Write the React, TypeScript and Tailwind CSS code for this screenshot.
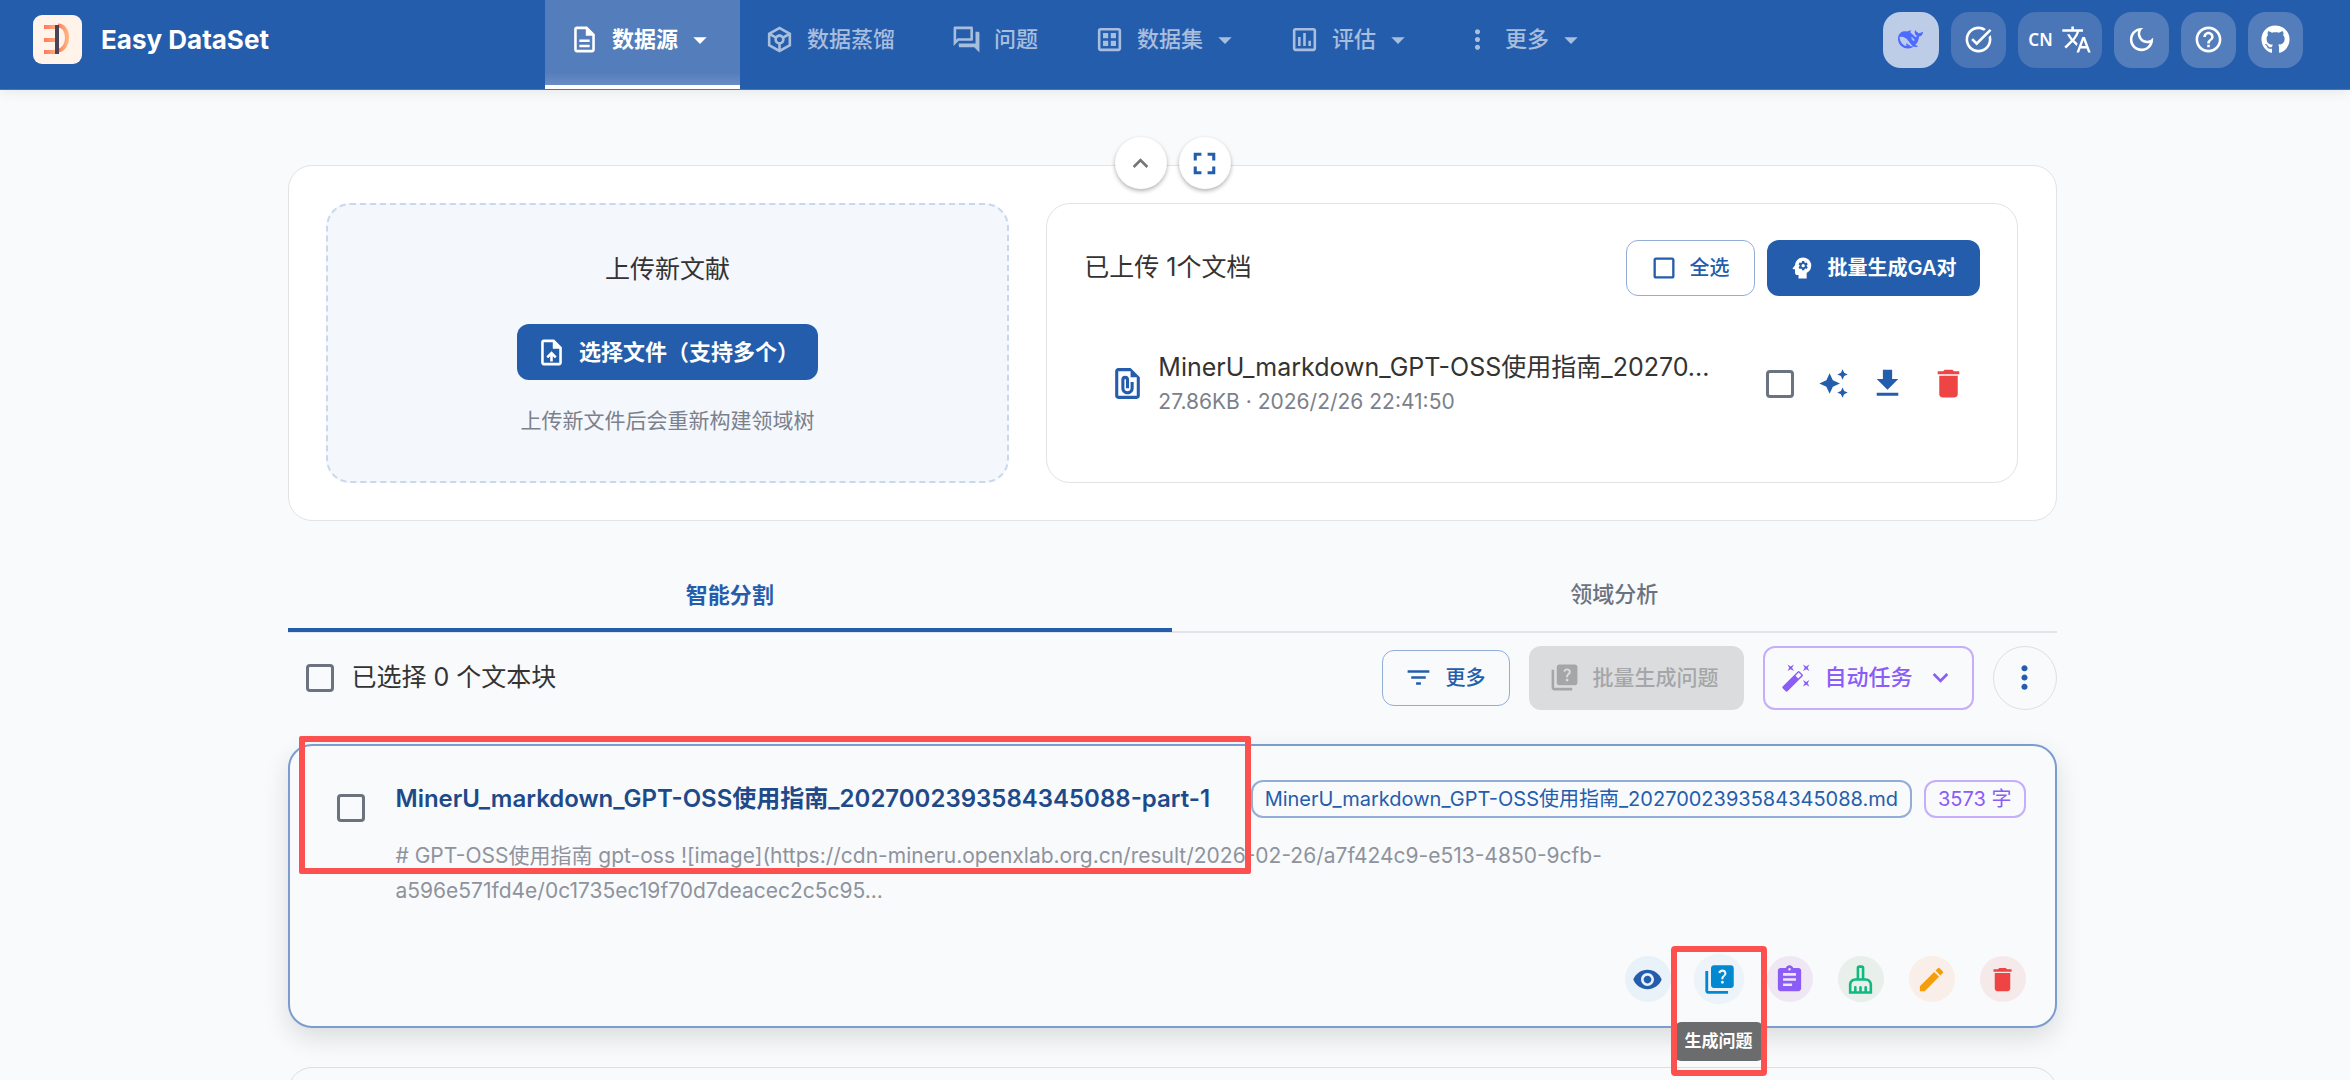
import type { ReactNode } from 'react';
import type { IconType } from 'react-icons';
import {
  MdArrowDropDown,
  MdAssignment,
  MdAutoAwesome,
  MdAutoFixHigh,
  MdCheckBoxOutlineBlank,
  MdDelete,
  MdEdit,
  MdExpandLess,
  MdExpandMore,
  MdFileDownload,
  MdFilterList,
  MdFullscreen,
  MdHelpOutline,
  MdMoreVert,
  MdOutlineAssessment,
  MdOutlineCleaningServices,
  MdOutlineDarkMode,
  MdOutlineDataset,
  MdOutlineDescription,
  MdOutlineFilePresent,
  MdOutlineForum,
  MdOutlineToken,
  MdPsychology,
  MdQuiz,
  MdTaskAlt,
  MdTranslate,
  MdUploadFile,
  MdVisibility,
} from 'react-icons/md';
import { FaGithub } from 'react-icons/fa';

function Logo() {
  return (
    <svg viewBox="0 0 49 49" className="size-[49px]" aria-hidden="true">
      <defs>
        <linearGradient id="logo-bar" x1="0" x2="1">
          <stop offset="0" stopColor="#ff7a59" />
          <stop offset="1" stopColor="#ffa478" />
        </linearGradient>
        <linearGradient id="logo-arc" x1="0" x2="1">
          <stop offset="0" stopColor="#ff7f5e" />
          <stop offset="1" stopColor="#ffb07c" />
        </linearGradient>
      </defs>
      <rect width="49" height="49" rx="9" fill="#fff3ea" />
      <rect x="11" y="10" width="11" height="4" fill="url(#logo-bar)" />
      <rect x="11" y="23" width="11" height="4" fill="url(#logo-bar)" />
      <rect x="11" y="35" width="11" height="4" fill="url(#logo-bar)" />
      <path d="M25 10.500c5.500 0 9 5 9 12s-3.500 12.500-9 13" fill="none" stroke="url(#logo-arc)" strokeWidth="4" />
      <rect x="22" y="10" width="4" height="29" fill="#4a4458" />
    </svg>
  );
}

function Whale() {
  return (
    <svg viewBox="0 0 24 24" className="size-[25px] fill-[#4d6bfe]" aria-hidden="true">
      <path d="M23.748 4.482c-.254-.124-.364.113-.512.234-.051.039-.094.09-.137.136-.372.397-.806.657-1.373.626-.829-.046-1.537.214-2.163.848-.133-.782-.575-1.248-1.247-1.548-.352-.156-.708-.311-.955-.65-.172-.241-.219-.51-.305-.774-.055-.16-.11-.323-.293-.35-.2-.031-.278.136-.356.276-.313.572-.434 1.202-.422 1.84.027 1.436.633 2.58 1.838 3.393.137.093.172.187.129.323-.082.28-.18.552-.266.833-.055.179-.137.217-.329.14a5.526 5.526 0 01-1.736-1.18c-.857-.828-1.631-1.742-2.597-2.458a11.365 11.365 0 00-.689-.471c-.985-.957.13-1.743.388-1.836.27-.098.093-.432-.779-.428-.872.004-1.67.295-2.687.684a3.055 3.055 0 01-.465.137 9.597 9.597 0 00-2.883-.102c-1.885.21-3.39 1.102-4.497 2.623C.082 8.606-.231 10.684.152 12.85c.403 2.284 1.569 4.175 3.36 5.653 1.858 1.533 3.997 2.284 6.438 2.14 1.482-.085 3.133-.284 4.994-1.86.47.234.962.327 1.78.397.63.059 1.236-.03 1.705-.128.735-.156.684-.837.419-.961-2.155-1.004-1.682-.595-2.113-.926 1.096-1.296 2.746-2.642 3.392-7.003.05-.347.007-.565 0-.845-.004-.17.035-.237.23-.256a4.173 4.173 0 001.545-.475c1.396-.763 1.96-2.015 2.093-3.517.02-.23-.004-.467-.247-.588zM11.581 18c-2.089-1.642-3.102-2.183-3.52-2.16-.392.024-.321.471-.235.763.09.288.207.486.371.739.114.167.192.416-.113.603-.673.416-1.842-.14-1.897-.167-1.361-.802-2.5-1.86-3.301-3.307-.774-1.393-1.224-2.887-1.298-4.482-.02-.386.093-.522.477-.592a4.696 4.696 0 011.529-.039c2.132.312 3.946 1.265 5.468 2.774.868.86 1.525 1.887 2.202 2.891.72 1.066 1.494 2.082 2.48 2.914.348.292.625.514.891.677-.802.09-2.14.11-3.054-.614zm1-6.44a.306.306 0 01.415-.287.302.302 0 01.2.288.306.306 0 01-.31.307.303.303 0 01-.304-.308zm3.11 1.596c-.2.081-.399.151-.59.16a1.245 1.245 0 01-.798-.254c-.274-.23-.47-.358-.552-.758a1.73 1.73 0 01.016-.588c.07-.327-.008-.537-.239-.727-.187-.156-.426-.199-.688-.199a.559.559 0 01-.254-.078c-.11-.054-.2-.19-.114-.358.028-.054.16-.186.192-.21.356-.202.767-.136 1.146.016.352.144.618.408 1.001.782.391.451.462.576.685.914.176.265.336.537.445.848.067.195-.019.354-.25.452z" />
    </svg>
  );
}

type NavItem = { label: string; icon: IconType; menu?: boolean; active?: boolean };

const navItems: NavItem[] = [
  { label: '数据源', icon: MdOutlineDescription, menu: true, active: true },
  { label: '数据蒸馏', icon: MdOutlineToken },
  { label: '问题', icon: MdOutlineForum },
  { label: '数据集', icon: MdOutlineDataset, menu: true },
  { label: '评估', icon: MdOutlineAssessment, menu: true },
  { label: '更多', icon: MdMoreVert, menu: true },
];

function NavLink({ label, icon: Icon, menu, active }: NavItem) {
  return (
    <a
      href="#"
      aria-current={active ? 'page' : undefined}
      className={
        active
          ? 'flex items-center border-b-4 border-white bg-linear-to-b from-[#547dbb] from-85% to-[#6a8cc4] px-6 pt-1.5 pb-3 font-bold text-white'
          : 'flex items-center border-b-4 border-transparent px-6 pt-1.5 pb-3 font-medium text-[#a8bedd]'
      }
    >
      <Icon className="size-[31px] shrink-0" />
      <span className="ml-3">{label}</span>
      {menu ? <MdArrowDropDown className="ml-1.5 size-8 shrink-0" /> : <span className="w-2" />}
    </a>
  );
}

function HeaderButton({ label, tone, children }: { label: string; tone: string; children: ReactNode }) {
  return (
    <button type="button" aria-label={label} className={`flex h-14 items-center justify-center rounded-[18px] text-white ${tone}`}>
      {children}
    </button>
  );
}

function Header() {
  return (
    <header className="relative flex h-[90px] items-stretch justify-between border-b border-[#4a74b4] bg-[#255dad] pr-[47px] pl-[33px] shadow-[0_2px_12px_rgba(0,0,0,0.08)]">
      <div className="flex items-center gap-[19px] pb-2.5">
        <Logo />
        <span className="text-[26px] font-bold text-white">Easy DataSet</span>
      </div>
      <nav className="ml-1 flex items-stretch text-[22px]">
        {navItems.map((item) => (
          <NavLink key={item.label} {...item} />
        ))}
      </nav>
      <div className="flex items-center gap-3 pb-2.5">
        <HeaderButton label="模型" tone="w-14 bg-[#bdcde7]">
          <Whale />
        </HeaderButton>
        <HeaderButton label="任务" tone="w-[55px] bg-[#4a76b8]">
          <MdTaskAlt className="size-[31px]" />
        </HeaderButton>
        <HeaderButton label="语言" tone="w-[84px] gap-2 bg-[#4a76b8]">
          <span className="font-['Noto_Sans'] text-[17px] font-semibold">CN</span>
          <MdTranslate className="size-[31px]" />
        </HeaderButton>
        <HeaderButton label="深色模式" tone="w-[55px] bg-[#547ebb]">
          <MdOutlineDarkMode className="size-[31px]" />
        </HeaderButton>
        <HeaderButton label="帮助" tone="w-[55px] bg-[#547ebb]">
          <MdHelpOutline className="size-[31px]" />
        </HeaderButton>
        <HeaderButton label="GitHub" tone="w-[55px] bg-[#547ebb]">
          <FaGithub className="size-[29px]" />
        </HeaderButton>
      </div>
    </header>
  );
}

function Checkbox({ label }: { label: string }) {
  return (
    <input
      type="checkbox"
      aria-label={label}
      className="size-7 shrink-0 appearance-none rounded-sm border-3 border-[#6b7280] checked:bg-[#255dad]"
    />
  );
}

function UploadPanel() {
  return (
    <section className="relative rounded-3xl border border-[#e1e3e6] bg-white p-[37px]">
      <div className="absolute -top-[29px] left-[826px] flex gap-3">
        <button type="button" aria-label="收起" className="flex size-[52px] items-center justify-center rounded-full bg-white text-[#757575] shadow-[0_2px_4px_rgba(0,0,0,0.3)]">
          <MdExpandLess className="size-[31px]" />
        </button>
        <button type="button" aria-label="全屏" className="flex size-[52px] items-center justify-center rounded-full bg-white text-[#255dad] shadow-[0_2px_4px_rgba(0,0,0,0.3)]">
          <MdFullscreen className="size-[37px]" />
        </button>
      </div>
      <div className="grid grid-cols-12 gap-[37px]">
        <div className="col-span-5 flex h-[280px] flex-col items-center rounded-3xl border-2 border-dashed border-[#c9d8ee] bg-[#f4f7fc] pt-[46px]">
          <h2 className="text-[25px] leading-9 text-[#333333]">上传新文献</h2>
          <button type="button" className="mt-[37px] flex h-14 items-center gap-3 rounded-xl bg-[#255dad] px-[19px] text-[22px] font-bold text-white">
            <MdUploadFile className="size-[31px]" />
            选择文件（支持多个）
          </button>
          <p className="mt-[23px] text-[21px] leading-9 text-[#7b818c]">上传新文件后会重新构建领域树</p>
        </div>
        <div className="col-span-7 h-[280px] rounded-3xl border border-[#e1e3e6] bg-white px-[37px] pt-9">
          <div className="flex items-center gap-3">
            <h2 className="flex-1 text-[25px] text-[#333333]">已上传 1个文档</h2>
            <button type="button" className="flex h-14 items-center gap-3 rounded-xl border border-[#92aed6] pr-6 pl-[23px] text-[20px] font-medium text-[#255dad]">
              <MdCheckBoxOutlineBlank className="size-7" />
              全选
            </button>
            <button type="button" className="flex h-14 items-center gap-3 rounded-xl bg-[#255dad] pr-6 pl-[21px] text-[20px] font-semibold text-white">
              <MdPsychology className="size-7" />
              批量生成GA对
            </button>
          </div>
          <div className="mt-[53px] flex items-center pr-[13px] pl-[25px]">
            <MdOutlineFilePresent className="size-[37px] text-[#255dad]" />
            <div className="ml-3 w-[560px]">
              <p className="truncate text-[25px] leading-9 text-[#333333]">MinerU_markdown_GPT-OSS使用指南_20270...</p>
              <p className="text-[21px] leading-[33px] text-[#7b818c]">27.86KB · 2026/2/26 22:41:50</p>
            </div>
            <div className="ml-auto flex items-center">
              <Checkbox label="选择文件" />
              <button type="button" aria-label="生成" className="ml-6 text-[#255dad]"><MdAutoAwesome className="size-[31px]" /></button>
              <button type="button" aria-label="下载" className="ml-5 text-[#255dad]"><MdFileDownload className="size-[37px]" /></button>
              <button type="button" aria-label="删除" className="ml-6 text-[#ef4444]"><MdDelete className="size-[37px]" /></button>
            </div>
          </div>
        </div>
      </div>
    </section>
  );
}

function Tabs() {
  return (
    <div role="tablist" className="mt-[37px] grid h-[75px] grid-cols-2 border-b-2 border-[#e1e3e6] text-[22px]">
      <button type="button" role="tab" aria-selected="true" className="-mb-px border-b-4 border-[#255dad] pt-1 font-bold text-[#255dad]">
        智能分割
      </button>
      <button type="button" role="tab" aria-selected="false" className="font-medium text-[#6b7280]">
        领域分析
      </button>
    </div>
  );
}

function Toolbar() {
  return (
    <div className="mt-3 flex h-[65px] items-center text-[22px]">
      <label className="flex flex-1 items-center gap-[18px] pl-[18px] text-[25px] text-[#333333]">
        <Checkbox label="已选择 0 个文本块" />
        已选择 0 个文本块
      </label>
      <button type="button" className="flex h-14 items-center gap-3 rounded-xl border border-[#92aed6] pr-6 pl-[21px] text-[20px] font-medium text-[#255dad]">
        <MdFilterList className="size-[29px]" />
        更多
      </button>
      <button type="button" disabled className="ml-[19px] flex h-16 items-center gap-3 rounded-xl bg-[#dbdcde] pr-[26px] pl-5 text-[21px] font-medium text-[#a5a6a8]">
        <MdQuiz className="size-[31px]" />
        批量生成问题
      </button>
      <button type="button" className="ml-[19px] flex h-16 items-center gap-3 rounded-xl border-2 border-[#c6aefa] px-4 font-medium text-[#8b5cf6]">
        <MdAutoFixHigh className="size-[31px]" />
        自动任务
        <MdExpandMore className="size-[31px]" />
      </button>
      <button type="button" aria-label="更多操作" className="ml-[19px] flex size-16 items-center justify-center rounded-full border border-[#dedfe2] text-[#255dad]">
        <MdMoreVert className="size-[37px]" />
      </button>
    </div>
  );
}

const actions: { label: string; icon: IconType; tone: string }[] = [
  { label: '查看', icon: MdVisibility, tone: 'bg-[#e9f1f9] text-[#255dad]' },
  { label: '生成问题', icon: MdQuiz, tone: 'scale-110 bg-[#edf4f9] text-[#0288d1]' },
  { label: '生成测评', icon: MdAssignment, tone: 'bg-[#efe7f3] text-[#8b5cf6]' },
  { label: '数据清洗', icon: MdOutlineCleaningServices, tone: 'bg-[#e9efeb] text-[#10b981]' },
  { label: '编辑', icon: MdEdit, tone: 'bg-[#f9eee8] text-[#f59e0b]' },
  { label: '删除', icon: MdDelete, tone: 'bg-[#f6e9ea] text-[#ef4444]' },
];

function ChunkCard() {
  return (
    <article className="relative mt-[34px] flex h-[284px] flex-col rounded-3xl border-2 border-[#7c9ccf] bg-[#f8fafc] pr-[29px] pl-[47px] shadow-[0_10px_26px_rgba(0,0,0,0.12)]">
      <div className="flex items-start pt-[34px]">
        <div className="pt-3.5">
          <Checkbox label="选择文本块" />
        </div>
        <div className="ml-[31px] flex-1">
          <div className="flex h-[38px] items-center">
            <h3 className="flex-1 text-[24px] font-semibold whitespace-nowrap text-[#1e4a8a]">
              MinerU_markdown_GPT-OSS使用指南_2027002393584345088-part-1
            </h3>
            <span className="flex h-[38px] items-center rounded-xl border-2 border-[#92aed6] px-3 text-[20px] whitespace-nowrap text-[#255dad]">
              MinerU_markdown_GPT-OSS使用指南_2027002393584345088.md
            </span>
            <span className="ml-3 flex h-[38px] items-center rounded-xl border-2 border-[#c6aefa] px-3 text-[20px] whitespace-nowrap text-[#8b5cf6]">
              3573 字
            </span>
          </div>
          <p className="mt-5 max-w-[1300px] text-[21px] leading-[35px] break-words text-[#8e939d]">
            # GPT-OSS使用指南 gpt-oss ![image](https://cdn-mineru.openxlab.org.cn/result/2026-02-26/a7f424c9-e513-4850-9cfb-a596e571fd4e/0c1735ec19f70d7deacec2c5c95...
          </p>
        </div>
      </div>
      <div className="mt-auto mb-6 flex justify-end gap-[25px]">
        {actions.map(({ label, icon: Icon, tone }) => (
          <div key={label} className="relative">
            <button type="button" aria-label={label} className={`flex size-[46px] items-center justify-center rounded-full ${tone}`}>
              <Icon className="size-[31px]" />
            </button>
            {label === '生成问题' && (
              <>
                <span role="tooltip" className="absolute top-[66px] left-1/2 z-10 flex h-[39px] -translate-x-1/2 items-center rounded-md bg-[#6b6c6d] px-2.5 text-[17px] font-bold whitespace-nowrap text-white">
                  生成问题
                </span>
                <span className="pointer-events-none absolute -top-2.5 left-1/2 z-20 h-[130px] w-24 -translate-x-1/2 rounded-sm border-6 border-[#fd5150]" />
              </>
            )}
          </div>
        ))}
      </div>
      <span className="pointer-events-none absolute -top-2.5 left-[9px] z-20 h-[138px] w-[952px] rounded-xs border-6 border-[#fd5150]" />
    </article>
  );
}

export default function App() {
  return (
    <div className="h-screen overflow-hidden bg-[#f8fafc] font-[Inter,'Noto_Sans_CJK_SC',sans-serif]">
      <Header />
      <main className="mr-1.5 px-6 pt-[75px]">
        <div className="mx-auto max-w-[1769px]">
          <UploadPanel />
          <Tabs />
          <Toolbar />
          <ChunkCard />
          <article className="mt-[39px] h-[284px] rounded-3xl border border-[#dcdee1]" />
        </div>
      </main>
    </div>
  );
}
